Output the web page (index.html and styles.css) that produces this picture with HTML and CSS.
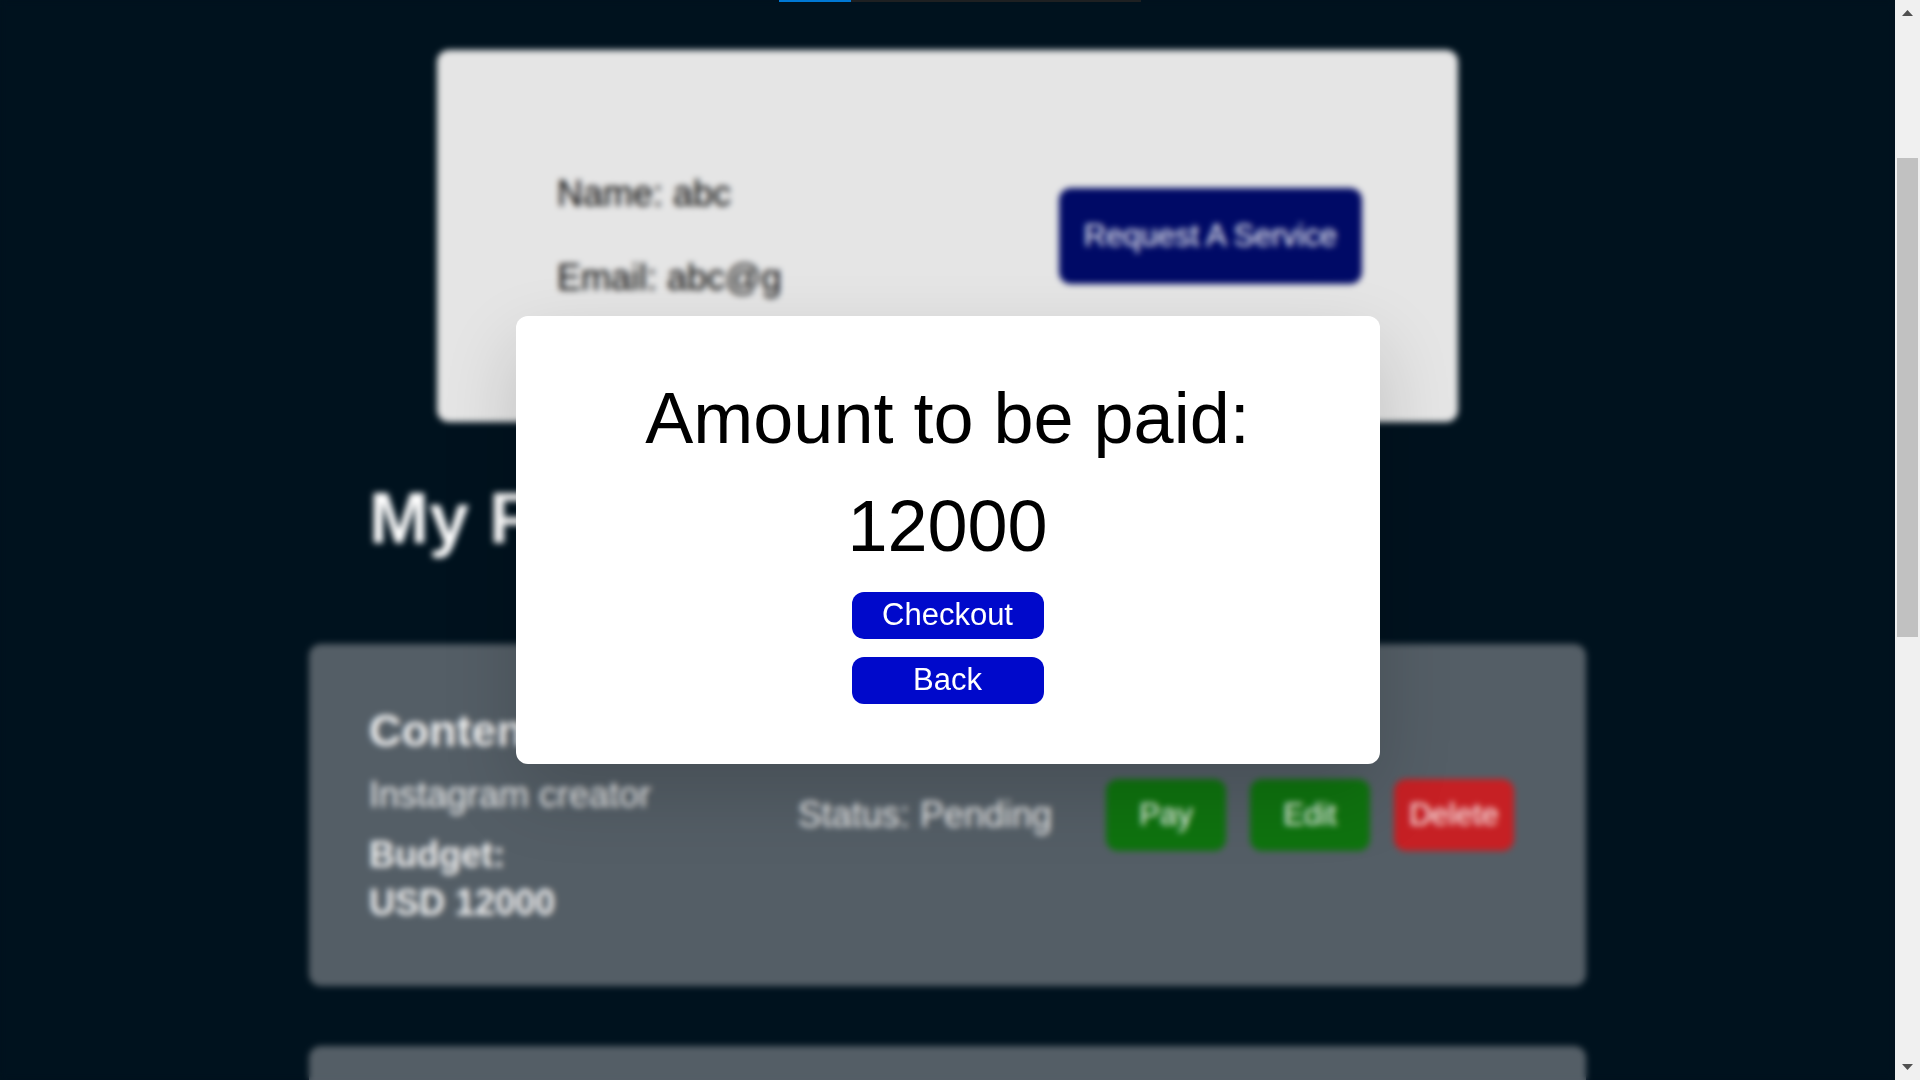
FILE: index.html
```html
<!DOCTYPE html>
<html lang="en">
<head>
<meta charset="utf-8">
<meta name="viewport" content="width=device-width, initial-scale=1">
<title>Payment</title>
<link rel="stylesheet" href="styles.css">
</head>
<body>
<div class="window">
  <div class="viewport">
    <main class="page">
      <section class="profile">
        <div class="profile-info">
          <p>Name: abc</p>
          <p>Email: abc@g</p>
        </div>
        <button class="btn btn-request" type="button">Request A Service</button>
      </section>
      <section class="requests">
        <h1 class="requests-title">My F</h1>
        <article class="card">
          <div class="card-info">
            <h2 class="card-title">Conten</h2>
            <p>Instagram creator</p>
            <p class="budget">Budget:<br>USD 12000</p>
          </div>
          <p class="status">Status: Pending</p>
          <div class="actions">
            <button class="btn btn-action" type="button">Pay</button>
            <button class="btn btn-action" type="button">Edit</button>
            <button class="btn btn-action btn-delete" type="button">Delete</button>
          </div>
        </article>
        <article class="card card-next"></article>
      </section>
    </main>
    <div class="overlay">
      <div class="modal" role="dialog" aria-modal="true" aria-labelledby="amount-label">
        <p class="amount" id="amount-label">Amount to be paid:</p>
        <p class="amount">12000</p>
        <div class="modal-actions">
          <button class="btn btn-modal" type="button">Checkout</button>
          <button class="btn btn-modal" type="button">Back</button>
        </div>
      </div>
    </div>
  </div>
  <div class="scrollbar" aria-hidden="true">
    <svg width="11" height="6" viewBox="0 0 11 6"><path d="M0 6 5.500 0 11 6z" fill="#505050"/></svg>
    <div class="track"><div class="thumb" style="margin-top:133px;height:479px"></div></div>
    <svg width="11" height="6" viewBox="0 0 11 6"><path d="M0 0 5.500 6 11 0z" fill="#505050"/></svg>
  </div>
</div>
<div class="progress"><div class="progress-value" style="width:20%"></div></div>
</body>
</html>
```
FILE: styles.css
```css
* {
  box-sizing: border-box;
}

body {
  margin: 0;
  background: #00121e;
  color: #fff;
  font: 36px/48px "Liberation Sans", Arial, sans-serif;
}

h1,
h2,
p {
  margin: 0;
}

.window {
  display: flex;
  height: 100vh;
  overflow: hidden;
}

.viewport {
  position: relative;
  flex: 1;
  min-width: 0;
  overflow: hidden;
}

.page {
  display: flex;
  flex-direction: column;
  align-items: center;
  padding: 50px 24px 0;
}

.btn {
  border: 0;
  border-radius: 12px;
  color: #fff;
  font: 31px/36px "Liberation Sans", Arial, sans-serif;
  cursor: pointer;
}

.profile {
  display: flex;
  align-items: center;
  justify-content: space-between;
  width: 100%;
  max-width: 1021px;
  padding: 120px 96px 120px 120px;
  border-radius: 12px;
  background: #e5e5e5;
  color: #000;
}

.profile-info {
  display: flex;
  flex-direction: column;
  gap: 36px;
}

.btn-request {
  padding: 30px 25px;
  background: #000a66;
}

.requests {
  width: 100%;
  max-width: 1277px;
}

.requests-title {
  margin: 42px 0 72px;
  padding-left: 60px;
  font-size: 72px;
  line-height: 108px;
}

.card {
  display: flex;
  align-items: center;
  padding: 59px 72px 59px 60px;
  border-radius: 12px;
  background: #545e66;
  color: #f4f4f4;
}

.card-next {
  min-height: 342px;
  margin-top: 60px;
}

.card-info {
  display: flex;
  flex: 1;
  flex-direction: column;
  gap: 12px;
}

.card-title {
  font-size: 45px;
  line-height: 56px;
}

.budget {
  font-weight: bold;
}

.status {
  margin-right: 54px;
}

.actions {
  display: flex;
  gap: 24px;
}

.btn-action {
  width: 120px;
  padding: 18px 0;
  background: #0f730f;
}

.btn-delete {
  background: #c62024;
}

.overlay {
  position: absolute;
  inset: 0;
  display: flex;
  align-items: center;
  justify-content: center;
  backdrop-filter: blur(3px);
}

.modal {
  width: 100%;
  max-width: 864px;
  padding: 48px 48px 60px;
  border-radius: 12px;
  background: #fff;
  box-shadow: 0 30px 75px rgba(0, 0, 0, 0.16);
  color: #000;
  text-align: center;
}

.amount {
  font-size: 72px;
  line-height: 108px;
}

.modal-actions {
  display: flex;
  flex-direction: column;
  align-items: center;
  gap: 18px;
  margin-top: 12px;
}

.btn-modal {
  width: 192px;
  padding: 5px 0 6px;
  background: #0009cb;
}

.scrollbar {
  display: flex;
  flex-direction: column;
  align-items: center;
  gap: 9px;
  width: 25px;
  padding: 10px 0;
  background: #f0f0f0;
}

.track {
  flex: 1;
  width: 21px;
}

.thumb {
  background: #c1c1c1;
}

.progress {
  position: fixed;
  top: 0;
  left: 50%;
  width: 362px;
  height: 2px;
  transform: translateX(-50%);
  background: #1e2022;
}

.progress-value {
  height: 100%;
  background: #0078d4;
}
```
